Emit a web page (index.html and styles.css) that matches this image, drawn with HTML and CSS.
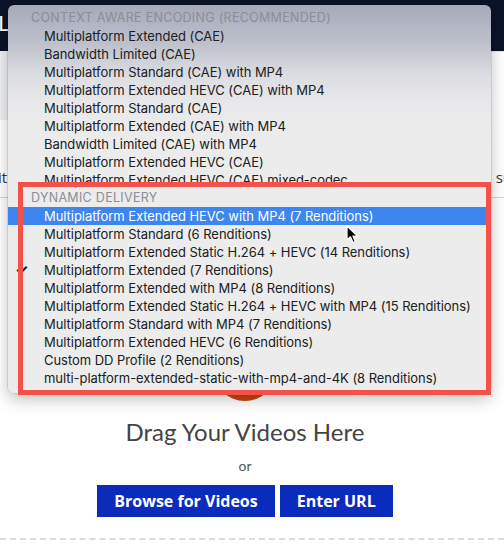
FILE: index.html
```html
<!DOCTYPE html>
<html>
<head>
<meta charset="utf-8">
<link rel="stylesheet" href="styles.css">
</head>
<body>
<div class="page">
  <header class="topbar"><span class="logo">L(</span></header>
  <div class="subbar"><div class="subbar-left"></div><div class="subbar-right"></div></div>
  <div class="settings">
    <div class="settings-line"><span>it</span><span>su</span></div>
    <div class="rule"></div>
  </div>
  <section class="dropzone">
    <div class="upload-circle"></div>
    <h1 class="drag-title">Drag Your Videos Here</h1>
    <p class="or">or</p>
    <div class="buttons">
      <button class="btn">Browse for Videos</button>
      <button class="btn">Enter URL</button>
    </div>
  </section>

  <div class="menu">
    <div class="menu-header">CONTEXT AWARE ENCODING (RECOMMENDED)</div>
    <div class="menu-item">Multiplatform Extended (CAE)</div>
    <div class="menu-item">Bandwidth Limited (CAE)</div>
    <div class="menu-item">Multiplatform Standard (CAE) with MP4</div>
    <div class="menu-item">Multiplatform Extended HEVC (CAE) with MP4</div>
    <div class="menu-item">Multiplatform Standard (CAE)</div>
    <div class="menu-item">Multiplatform Extended (CAE) with MP4</div>
    <div class="menu-item">Bandwidth Limited (CAE) with MP4</div>
    <div class="menu-item">Multiplatform Extended HEVC (CAE)</div>
    <div class="menu-item">Multiplatform Extended HEVC (CAE) mixed-codec</div>
    <div class="menu-header">DYNAMIC DELIVERY</div>
    <div class="menu-item selected">Multiplatform Extended HEVC with MP4 (7 Renditions)</div>
    <div class="menu-item">Multiplatform Standard (6 Renditions)</div>
    <div class="menu-item">Multiplatform Extended Static H.264 + HEVC (14 Renditions)</div>
    <div class="menu-item checked"><span class="check">✓</span>Multiplatform Extended (7 Renditions)</div>
    <div class="menu-item">Multiplatform Extended with MP4 (8 Renditions)</div>
    <div class="menu-item">Multiplatform Extended Static H.264 + HEVC with MP4 (15 Renditions)</div>
    <div class="menu-item">Multiplatform Standard with MP4 (7 Renditions)</div>
    <div class="menu-item">Multiplatform Extended HEVC (6 Renditions)</div>
    <div class="menu-item">Custom DD Profile (2 Renditions)</div>
    <div class="menu-item">multi-platform-extended-static-with-mp4-and-4K (8 Renditions)</div>
  </div>

  <div class="annotation"></div>

  <svg class="cursor" width="14" height="20" viewBox="0 0 14 20">
    <path d="M1 1 L1 15 L4.5 11.8 L7 17.5 L9.3 16.5 L6.9 11 L11.5 11 Z" fill="#000" stroke="#fff" stroke-width="1.2" stroke-linejoin="round"/>
  </svg>
</div>
</body>
</html>
```

FILE: styles.css
```css
* { box-sizing: border-box; }
html, body { margin: 0; padding: 0; background: #fff; }
body { width: 504px; height: 545px; overflow: hidden; font-family: Inter, "Liberation Sans", sans-serif; }

.page { position: relative; width: 504px; height: 545px; overflow: hidden; }

.topbar {
  height: 51px;
  background: #0b1328;
  display: flex;
  align-items: center;
}
.logo { color: #fff; font-family: Lato, sans-serif; font-size: 22px; margin-left: -2px; margin-top: -6px; }

.subbar { display: flex; height: 69px; }
.subbar-left { width: 30px; background: #eff0f3; }
.subbar-right { flex: 1; background: #fff; border-top: 1px solid #e6e6e8; }

.settings { padding-top: 47px; }
.settings-line {
  display: flex;
  justify-content: space-between;
  font-family: "Open Sans", sans-serif;
  font-size: 15px;
  color: #333;
  height: 20px;
  line-height: 20px;
  margin-left: -2px;
  margin-right: -8px;
}
.rule { height: 1px; background: #d5d5d8; margin-top: 10px; }

.dropzone {
  display: flex;
  flex-direction: column;
  align-items: center;
  margin-top: 141px;
  padding-right: 14px;
  padding-bottom: 21px;
  border-bottom: 2px dashed #dcdcdc;
}
.upload-circle {
  width: 62px;
  height: 62px;
  border-radius: 50%;
  background: #c9440f;
}
.drag-title {
  margin: 17px 0 0;
  font-family: Lato, sans-serif;
  font-weight: 400;
  font-size: 24px;
  color: #444;
  line-height: 28px;
}
.or {
  margin: 11px 0 0;
  font-family: Lato, sans-serif;
  font-size: 14px;
  color: #555;
  line-height: 18px;
}
.buttons { display: flex; gap: 5px; margin-top: 10px; }
.btn {
  height: 32px;
  border: 0;
  background: #0b2bbd;
  color: #fff;
  font-family: "Open Sans", sans-serif;
  font-weight: 700;
  font-size: 16px;
  padding: 0 17px;
}

.menu {
  position: absolute;
  left: 8px;
  top: 5px;
  width: 483px;
  height: 388px;
  padding-top: 4px;
  border-radius: 6px;
  background: linear-gradient(to bottom, #a5a9ba 0px, #bfc2cd 40px, #dcdde2 70px, #e9e9eb 100px, #ececec 140px, #ececec 100%);
  box-shadow: 0 6px 16px rgba(0,0,0,0.25), 0 0 0 0.5px rgba(0,0,0,0.2);
  font-family: Inter, "Liberation Sans", sans-serif;
  font-size: 13px;
  overflow: hidden;
}
.menu-header {
  height: 18px;
  line-height: 18px;
  padding-left: 23px;
  color: #8b8e97;
  font-size: 12.5px;
  letter-spacing: 0.3px;
}
.menu-item {
  position: relative;
  height: 18px;
  line-height: 18px;
  padding-left: 36px;
  color: #202020;
  white-space: nowrap;
  letter-spacing: -0.05px;
}
.menu-item.selected { background: #3d85ef; color: #fff; }
.check { position: absolute; left: 7px; top: 0; font-size: 15px; font-weight: 700; color: #222; }

.annotation {
  position: absolute;
  left: 18px;
  top: 182px;
  width: 473px;
  height: 213px;
  border: 5px solid #f5514a;
}

.cursor { position: absolute; left: 346px; top: 225px; }
```
